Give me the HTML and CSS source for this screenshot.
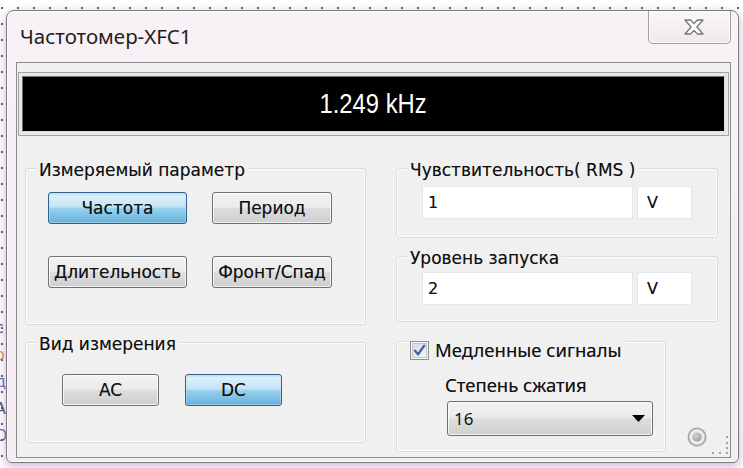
FILE: index.html
```html
<!DOCTYPE html>
<html lang="ru">
<head>
<meta charset="utf-8">
<title>Частотомер-XFC1</title>
<link rel="stylesheet" href="styles.css">
</head>
<body>
<div class="desk">
  <!-- schematic labels peeking out from behind the instrument window -->
  <div class="sheet-text">
    <span class="ink-dark">c</span>
    <span class="ink-orange">o</span>
    <span class="ink-blue">д</span>
    <span class="ink-dark">A</span>
    <span class="ink-blue">D</span>
  </div>

  <div class="window">
    <div class="titlebar">
      <span class="title">Частотомер-XFC1</span>
      <button class="close" type="button" aria-label="Закрыть">
        <svg width="20" height="16" viewBox="0 0 20 16">
          <path d="M1 1H6.6L10 4.6L13.4 1H19L12.9 8L19 15H13.4L10 11.4L6.6 15H1L7.1 8Z"
                fill="#ffffff" stroke="#767676" stroke-width="1.3" stroke-linejoin="round"/>
        </svg>
      </button>
    </div>

    <div class="client">
      <div class="display">
        <div class="readout"><span class="value">1.249 kHz</span></div>
      </div>

      <div class="panels">
        <div class="col-left">
          <div class="group g-param">
            <div class="legend">Измеряемый параметр</div>
            <div class="btn-grid">
              <button class="btn on" type="button">Частота</button>
              <button class="btn" type="button">Период</button>
              <button class="btn" type="button">Длительность</button>
              <button class="btn" type="button">Фронт/Спад</button>
            </div>
          </div>
          <div class="group g-mode">
            <div class="legend">Вид измерения</div>
            <div class="btn-row">
              <button class="btn mode" type="button">AC</button>
              <button class="btn mode on" type="button">DC</button>
            </div>
          </div>
        </div>

        <div class="col-right">
          <div class="group g-sens">
            <div class="legend">Чувствительность( RMS )</div>
            <div class="field-row">
              <div class="field">1</div>
              <div class="field unit">V</div>
            </div>
          </div>
          <div class="group g-trig">
            <div class="legend">Уровень запуска</div>
            <div class="field-row">
              <div class="field">2</div>
              <div class="field unit">V</div>
            </div>
          </div>
          <div class="bottom-row">
            <div class="group g-slow">
              <div class="legend check">
                <svg class="checkbox" width="19" height="19" viewBox="0 0 19 19">
                  <defs>
                    <linearGradient id="cbFill" x1="0" y1="0" x2="1" y2="1">
                      <stop offset="0" stop-color="#d6d9de"/>
                      <stop offset="1" stop-color="#f7f7f7"/>
                    </linearGradient>
                  </defs>
                  <rect x="0.5" y="0.5" width="18" height="18" fill="#f4f4f4" stroke="#8e8f8f"/>
                  <rect x="2.5" y="2.5" width="14" height="14" fill="url(#cbFill)" stroke="#c4c8cd"/>
                  <path d="M5 9.6L8 13.4L14.2 4.6" fill="none" stroke="#3a5fa8" stroke-width="2.3" stroke-linecap="round" stroke-linejoin="round"/>
                </svg>
                <span>Медленные сигналы</span>
              </div>
              <div class="sub-label">Степень сжатия</div>
              <div class="select">
                <span>16</span>
                <svg width="13" height="7" viewBox="0 0 13 7"><path d="M0 0H13L6.5 7Z" fill="#000"/></svg>
              </div>
            </div>
            <svg class="status-led" width="20" height="20" viewBox="0 0 20 20">
              <defs>
                <radialGradient id="ledCore" cx="0.4" cy="0.35" r="0.7">
                  <stop offset="0" stop-color="#d4d4d4"/>
                  <stop offset="1" stop-color="#9c9c9c"/>
                </radialGradient>
              </defs>
              <circle cx="10" cy="10" r="8.6" fill="#ececec" stroke="#a9a9a9" stroke-width="1.8"/>
              <circle cx="10" cy="10" r="4.6" fill="url(#ledCore)"/>
            </svg>
          </div>
        </div>
      </div>

      <svg class="grip" width="18" height="22" viewBox="0 0 18 22">
        <g fill="#a2a2a2">
          <rect x="15" y="2" width="2" height="2"/>
          <rect x="15" y="8" width="2" height="2"/>
          <rect x="15" y="13" width="2" height="2"/>
          <rect x="15" y="18" width="2" height="2"/>
          <rect x="1" y="18" width="2" height="2"/>
          <rect x="8" y="18" width="2" height="2"/>
        </g>
      </svg>
    </div>
  </div>
</div>
</body>
</html>
```

FILE: styles.css
```css
* {
  box-sizing: border-box;
}

html,
body {
  margin: 0;
}

body {
  width: 743px;
  height: 468px;
  overflow: hidden;
  background: #ffffff;
}

/* schematic sheet with its dotted grid */
.desk {
  position: relative;
  width: 743px;
  height: 468px;
  padding: 10px 0 0 6px;
  background-color: #ffffff;
  background-image: radial-gradient(circle, #5c5c5c 0.9px, transparent 1.4px);
  background-size: 16px 16px;
  background-position: -6px 0;
}

.sheet-text {
  position: absolute;
  left: -5px;
  top: 318px;
  display: flex;
  flex-direction: column;
  gap: 7px;
  font: 16px/20px "DejaVu Sans", sans-serif;
  opacity: 0.8;
}

.ink-dark { color: #2b2b4a; }
.ink-orange { color: #c8802a; }
.ink-blue { color: #2a55a8; }

/* window frame */
.window {
  position: relative;
  z-index: 1;
  width: 733px;
  height: 453px;
  display: flex;
  flex-direction: column;
  padding: 0 7px 4px 9px;
  border: 1px solid #7a7a7a;
  border-radius: 8px 8px 6px 6px;
  background: linear-gradient(#f8f1f6, #f3ecf1);
  box-shadow: inset 0 0 0 1px rgba(255, 255, 255, 0.85),
              0 3px 9px 1px rgba(165, 105, 185, 0.45);
}

.titlebar {
  height: 51px;
  display: flex;
  justify-content: space-between;
  align-items: flex-start;
  padding-left: 4px;
}

.title {
  margin-top: 13px;
  font: 20.5px/24px "Noto Sans", sans-serif;
  color: #1e1e1e;
}

.close {
  width: 83px;
  height: 33px;
  margin: 0;
  padding: 0 0 0 9px;
  display: flex;
  align-items: center;
  justify-content: center;
  border: 1px solid #a49ea2;
  border-top: none;
  border-radius: 0 0 5px 5px;
  background: linear-gradient(#fbf6fa, #efe8ed);
  box-shadow: inset 0 0 0 1px rgba(255, 255, 255, 0.8);
}

/* client area */
.client {
  position: relative;
  height: 396px;
  border: 1px solid #8d8d8d;
  background: #f0f0f0;
  color: #111111;
}

.display {
  margin: 9px 1px 0;
  padding: 3px;
  border: 1px solid #a3a3a3;
  background: #e9e9e9;
}

.readout {
  height: 56px;
  display: flex;
  align-items: center;
  justify-content: center;
  border: 1px solid;
  border-color: #6e6e6e #dcdcdc #dcdcdc #6e6e6e;
  background: #000000;
}

.value {
  display: inline-block;
  color: #ffffff;
  font: 28px/1 "Liberation Sans", Arial, sans-serif;
  transform: scaleX(0.85);
}

.panels {
  display: flex;
  gap: 30px;
  margin-top: 32px;
  padding-left: 8px;
}

.col-left {
  width: 341px;
  display: flex;
  flex-direction: column;
  gap: 17px;
}

.col-right {
  width: 322px;
  display: flex;
  flex-direction: column;
}

/* group boxes */
.group {
  border: 1px solid #d3dde4;
  border-radius: 3px;
  box-shadow: inset 0 0 0 1px rgba(255, 255, 255, 0.8);
}

.legend {
  width: max-content;
  margin: -8px 0 0 10px;
  padding: 0 3px;
  background: #f0f0f0;
  font: 17px/18px "DejaVu Sans", sans-serif;
  color: #111111;
  text-shadow: 0 0 0.5px rgba(0, 0, 0, 0.45);
}

.g-param {
  height: 157px;
}

.btn-grid {
  display: grid;
  grid-template-columns: 139px 120px;
  grid-auto-rows: 32px;
  column-gap: 25px;
  row-gap: 32px;
  margin-top: 13px;
  padding-left: 22px;
}

.btn {
  height: 32px;
  padding: 0;
  white-space: nowrap;
  border: 1px solid #707070;
  border-radius: 3px;
  background: linear-gradient(#f3f3f3, #ebebeb 46%, #dddddd 52%, #cfcfcf);
  box-shadow: inset 0 0 0 1px rgba(255, 255, 255, 0.75);
  font: 17px "DejaVu Sans", sans-serif;
  color: #111111;
  text-shadow: 0 0 0.5px rgba(0, 0, 0, 0.45);
}

.btn.on {
  border-color: #2c628b;
  background: linear-gradient(#e3f3fc, #c4e5f6 46%, #98d1ef 52%, #66b1da);
  box-shadow: inset 0 0 0 1px rgba(255, 255, 255, 0.35),
              inset 0 1px 2px rgba(0, 40, 80, 0.25);
}

.g-mode {
  height: 101px;
}

.btn-row {
  display: flex;
  gap: 26px;
  margin-top: 21px;
  padding-left: 36px;
}

.btn.mode {
  width: 97px;
}

/* value fields */
.g-sens {
  height: 70px;
}

.g-trig {
  height: 66px;
  margin-top: 18px;
}

.field-row {
  display: flex;
  gap: 4px;
  margin-top: 7px;
  padding-left: 25px;
}

.g-trig .field-row {
  margin-top: 5px;
}

.field {
  width: 211px;
  height: 33px;
  display: flex;
  align-items: center;
  padding-left: 5px;
  background: #ffffff;
  border: 1px solid #e3e7eb;
  font: 16px "DejaVu Sans", sans-serif;
  color: #111111;
  text-shadow: 0 0 0.5px rgba(0, 0, 0, 0.45);
}

.field.unit {
  width: 55px;
  padding-left: 9px;
}

/* slow signal options */
.bottom-row {
  display: flex;
  margin-top: 19px;
}

.g-slow {
  width: 270px;
  height: 111px;
}

.legend.check {
  display: flex;
  align-items: center;
  gap: 6px;
  margin-top: -3px;
  font: 18.5px/22px "Noto Sans", sans-serif;
}

.sub-label {
  margin-top: 13px;
  padding-left: 48px;
  font: 18.5px/22px "Noto Sans", sans-serif;
  color: #111111;
  text-shadow: 0 0 0.5px rgba(0, 0, 0, 0.45);
}

.select {
  width: 206px;
  height: 35px;
  margin: 5px 0 0 50px;
  display: flex;
  align-items: center;
  justify-content: space-between;
  padding: 0 7px 0 6px;
  border: 1px solid #707070;
  border-radius: 3px;
  background: linear-gradient(#f3f3f3, #ebebeb 46%, #dddddd 52%, #cfcfcf);
  box-shadow: inset 0 0 0 1px rgba(255, 255, 255, 0.75);
  font: 17px "Noto Sans", sans-serif;
  color: #111111;
}

.status-led {
  align-self: flex-end;
  margin: 0 0 5px 21px;
}

.grip {
  position: absolute;
  right: 1px;
  bottom: 1px;
}
```
